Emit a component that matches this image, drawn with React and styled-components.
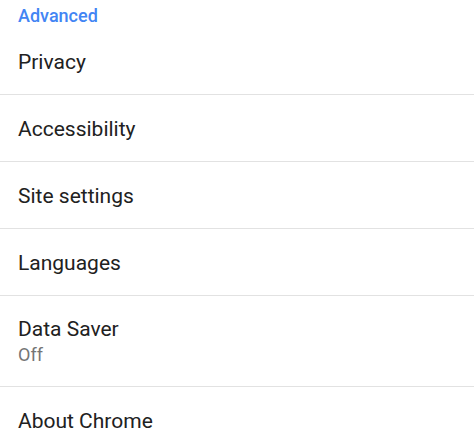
import React from "react";
import styled, { createGlobalStyle } from "styled-components";

const Global = createGlobalStyle`
  html, body { margin: 0; padding: 0; background: #ffffff; }
  body { font-family: Roboto, "Noto Sans", "Liberation Sans", sans-serif; -webkit-font-smoothing: antialiased; }
`;

const Page = styled.div`
  width: 474px;
  height: 445px;
  overflow: hidden;
  background: #ffffff;
  display: flex;
  flex-direction: column;
`;

const SectionHeader = styled.div`
  flex-shrink: 0;
  height: 28px;
  box-sizing: border-box;
  padding: 5px 18px 0;
  font-size: 18px;
  line-height: 22px;
  font-weight: 500;
  color: #4285f4;
`;

const Row = styled.div`
  flex-shrink: 0;
  box-sizing: content-box;
  height: ${(p) => (p.$tall ? 90 : 66)}px;
  padding: 0 18px;
  display: flex;
  flex-direction: column;
  justify-content: flex-start;
  border-bottom: ${(p) => (p.$last ? "none" : "1px solid #e2e2e2")};
`;

const Inner = styled.div`
  padding-top: ${(p) => (p.$tall ? 21 : 22)}px;
  display: flex;
  flex-direction: column;
`;

const Title = styled.div`
  font-size: 21px;
  line-height: 24px;
  color: #212121;
`;

const Summary = styled.div`
  margin-top: 3px;
  font-size: 18px;
  line-height: 22px;
  color: #757575;
`;

const items = [
  { title: "Privacy" },
  { title: "Accessibility" },
  { title: "Site settings" },
  { title: "Languages" },
  { title: "Data Saver", summary: "Off" },
  { title: "About Chrome" },
];

export default function App() {
  return (
    <>
      <Global />
      <Page>
        <SectionHeader>Advanced</SectionHeader>
        {items.map((it, i) => (
          <Row key={it.title} $tall={!!it.summary} $last={i === items.length - 1}>
            <Inner $tall={!!it.summary}>
              <Title>{it.title}</Title>
              {it.summary && <Summary>{it.summary}</Summary>}
            </Inner>
          </Row>
        ))}
      </Page>
    </>
  );
}
